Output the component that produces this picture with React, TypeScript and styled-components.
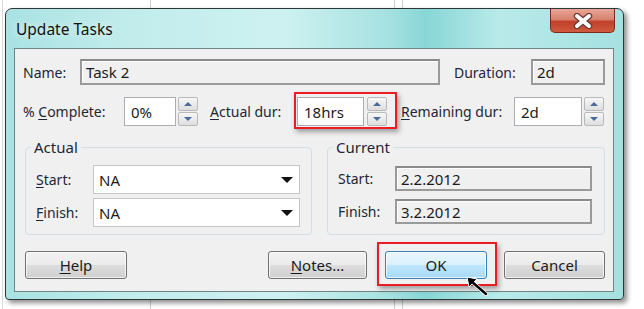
import React from 'react';
import styled, { createGlobalStyle } from 'styled-components';

const GlobalStyle = createGlobalStyle`
  html, body {
    margin: 0;
    padding: 0;
    background: #fff;
  }
  body {
    font-family: "Noto Sans", "Open Sans", sans-serif;
    font-size: 14px;
    color: #1b1b1b;
  }
`;

const Page = styled.div`
  position: relative;
  width: 644px;
  height: 309px;
  box-sizing: border-box;
  padding: 8px 0 0 5px;
  overflow: hidden;
  background:
    linear-gradient(#cfcfcf, #cfcfcf) 150px 0 / 1px 100% no-repeat,
    linear-gradient(#cfcfcf, #cfcfcf) 394px 0 / 1px 100% no-repeat,
    linear-gradient(#cfcfcf, #cfcfcf) 402px 0 / 1px 100% no-repeat,
    linear-gradient(#d8d8d8, #d8d8d8) 2px 0 / 1px 100% no-repeat,
    #fff;
`;

const Window = styled.div`
  width: 619px;
  height: 292px;
  box-sizing: border-box;
  border: 1px solid #2c3838;
  border-radius: 7px 7px 4px 4px;
  display: flex;
  flex-direction: column;
  background: linear-gradient(
    to right,
    #a9e2e3 0%,
    #c2ecec 20%,
    #cdf1f0 45%,
    #a6e1e1 62%,
    #88d6d6 68%,
    #b9eaea 80%,
    #a5e0e0 100%
  );
  box-shadow: 3px 3px 5px rgba(0, 0, 0, 0.45);
`;

const TitleBar = styled.div`
  height: 39px;
  display: flex;
  align-items: flex-start;
  padding-left: 10px;
`;

const Title = styled.span`
  font-size: 15.5px;
  line-height: 15px;
  margin-top: 13px;
  color: #111;
  text-shadow: 0 0 8px rgba(255, 255, 255, 0.9);
`;

const CloseButton = styled.div`
  margin-left: auto;
  margin-right: 8px;
  width: 65px;
  height: 24px;
  box-sizing: border-box;
  border: 1px solid #7d2a1d;
  border-top: none;
  border-radius: 0 0 5px 5px;
  background: linear-gradient(#e9a597 0%, #d9826f 45%, #c0402a 55%, #cf5a3e 100%);
  display: flex;
  align-items: center;
  justify-content: center;
`;

const Client = styled.div`
  flex: 1;
  margin: 0 9px 7px 8px;
  box-sizing: border-box;
  border: 1px solid #6f8585;
  background: #f0f0f0;
  padding: 10px 0 0 0;
  display: flex;
  flex-direction: column;
`;

const Row = styled.div<{ $top?: number }>`
  display: flex;
  align-items: center;
  margin-top: ${(p) => p.$top ?? 0}px;
`;

const Label = styled.span<{ $w: number; $ml?: number }>`
  width: ${(p) => p.$w}px;
  margin-left: ${(p) => p.$ml ?? 0}px;
  flex: none;
  white-space: nowrap;
  color: #1e2636;
`;

const Key = styled.span`
  text-decoration: underline;
  text-underline-offset: 2px;
`;

const Field = styled.div<{ $w: number; $h?: number; $ro?: boolean }>`
  width: ${(p) => p.$w}px;
  height: ${(p) => p.$h ?? 26}px;
  flex: none;
  box-sizing: border-box;
  display: flex;
  align-items: center;
  padding-left: ${(p) => (p.$ro ? 4 : 6)}px;
  font-size: 15px;
  background: ${(p) => (p.$ro ? '#f0f0f0' : '#fff')};
  border: ${(p) => (p.$ro ? '2px solid #9a9a9a' : '1px solid #abadb3')};
  border-top-color: ${(p) => (p.$ro ? '#8a8a8a' : '#abadb3')};
  ${(p) => (p.$ro ? 'box-shadow: inset 1px 1px 0 #fff;' : '')}
`;

const Spinner = styled.div<{ $ml?: number }>`
  margin-left: ${(p) => p.$ml ?? 2}px;
  width: 20px;
  height: 29px;
  flex: none;
  display: flex;
  flex-direction: column;
  justify-content: space-between;
`;

const SpinButton = styled.div<{ $down?: boolean }>`
  height: 14px;
  box-sizing: border-box;
  border: 1px solid #b9b9b9;
  border-radius: 2px;
  background: linear-gradient(#f7f7f7, #dedede);
  display: flex;
  align-items: center;
  justify-content: center;

  &::after {
    content: '';
    width: 0;
    height: 0;
    border-left: 4px solid transparent;
    border-right: 4px solid transparent;
    ${(p) =>
      p.$down ? 'border-top: 4px solid #4b6a9a;' : 'border-bottom: 4px solid #4b6a9a;'}
  }
`;

const Highlight = styled.div<{ $pad: string; $neg: string }>`
  position: relative;
  display: flex;
  align-items: center;
  flex: none;
  border: 2px solid #ea1c24;
  padding: ${(p) => p.$pad};
  margin: ${(p) => p.$neg};
  box-shadow: 2px 3px 5px rgba(0, 0, 0, 0.35);
`;

const Groups = styled.div`
  display: flex;
  gap: 15px;
  margin: 11px 0 0 10px;
`;

const Group = styled.fieldset<{ $w: number; $pad: string; $gap: number }>`
  width: ${(p) => p.$w}px;
  box-sizing: border-box;
  margin: 0;
  border: 1px solid #d3dde2;
  border-radius: 4px;
  padding: ${(p) => p.$pad};
  display: flex;
  flex-direction: column;
  gap: ${(p) => p.$gap}px;
`;

const Legend = styled.legend`
  padding: 0 3px;
  margin-left: -5px;
  line-height: 20px;
  font-size: 15px;
  color: #1e2636;
`;

const Dropdown = styled.div`
  width: 207px;
  height: 29px;
  box-sizing: border-box;
  border: 1px solid #c6c6c6;
  background: #fff;
  display: flex;
  align-items: center;
  padding: 0 6px 0 5px;
  font-size: 15px;

  &::after {
    content: '';
    margin-left: auto;
    border-left: 6px solid transparent;
    border-right: 6px solid transparent;
    border-top: 6px solid #111;
  }
`;

const ButtonRow = styled.div`
  display: flex;
  align-items: center;
  margin: 16px 0 0 10px;
`;

const Button = styled.div<{ $w: number; $ml?: number; $def?: boolean }>`
  width: ${(p) => p.$w}px;
  height: 28px;
  margin-left: ${(p) => p.$ml ?? 0}px;
  box-sizing: border-box;
  flex: none;
  border: 1px solid ${(p) => (p.$def ? '#3c7fb1' : '#707070')};
  border-radius: 3px;
  background: ${(p) =>
    p.$def
      ? 'linear-gradient(#eaf6fd 0%, #d9f0fc 50%, #bee6fd 51%, #a7d9f5 100%)'
      : 'linear-gradient(#f2f2f2 0%, #ebebeb 50%, #dddddd 51%, #cfcfcf 100%)'};
  box-shadow: inset 0 0 0 1px rgba(255, 255, 255, 0.7);
  display: flex;
  align-items: center;
  justify-content: center;
  font-size: 15px;
  color: #1b1b1b;
`;

const Cursor = styled.svg`
  position: absolute;
  left: 87px;
  top: 32px;
`;

export default function App() {
  return (
    <Page>
      <GlobalStyle />
      <Window>
        <TitleBar>
          <Title>Update Tasks</Title>
          <CloseButton>
            <svg width="22" height="16" viewBox="0 0 22 16">
              <path
                d="M5 3 L17 13 M17 3 L5 13"
                stroke="#6a3a32"
                strokeWidth="6.5"
                strokeLinecap="round"
              />
              <path
                d="M5 3 L17 13 M17 3 L5 13"
                stroke="#fff"
                strokeWidth="4"
                strokeLinecap="round"
              />
            </svg>
          </CloseButton>
        </TitleBar>
        <Client>
          <Row>
            <Label $w={57} $ml={8}>Name:</Label>
            <Field $w={360} $ro>Task 2</Field>
            <Label $w={77} $ml={14}>Duration:</Label>
            <Field $w={74} $ro>2d</Field>
          </Row>
          <Row $top={12}>
            <Label $w={101} $ml={8}>
              % <Key>C</Key>omplete:
            </Label>
            <Field $w={52} $h={29}>0%</Field>
            <Spinner>
              <SpinButton />
              <SpinButton $down />
            </Spinner>
            <Label $w={87} $ml={12}>
              <Key>A</Key>ctual dur:
            </Label>
            <Highlight $pad="3px 8px 1px 1px" $neg="-5px -10px -3px -3px">
              <Field $w={67} $h={29}>18hrs</Field>
              <Spinner $ml={3}>
                <SpinButton />
                <SpinButton $down />
              </Spinner>
            </Highlight>
            <Label $w={113} $ml={14}>
              <Key>R</Key>emaining dur:
            </Label>
            <Field $w={68} $h={29}>2d</Field>
            <Spinner>
              <SpinButton />
              <SpinButton $down />
            </Spinner>
          </Row>
          <Groups>
            <Group $w={287} $pad="8px 11px 7px 10px" $gap={4}>
              <Legend>Actual</Legend>
              <Row>
                <Label $w={57}>
                  <Key>S</Key>tart:
                </Label>
                <Dropdown>NA</Dropdown>
              </Row>
              <Row>
                <Label $w={57}>
                  <Key>F</Key>inish:
                </Label>
                <Dropdown>NA</Dropdown>
              </Row>
            </Group>
            <Group $w={277} $pad="9px 12px 10px 10px" $gap={8}>
              <Legend>Current</Legend>
              <Row>
                <Label $w={57}>Start:</Label>
                <Field $w={197} $h={25} $ro>2.2.2012</Field>
              </Row>
              <Row>
                <Label $w={57}>Finish:</Label>
                <Field $w={197} $h={25} $ro>3.2.2012</Field>
              </Row>
            </Group>
          </Groups>
          <ButtonRow>
            <Button $w={102}>
              <span>
                <Key>H</Key>elp
              </span>
            </Button>
            <Button $w={99} $ml={141}>
              <span>
                <Key>N</Key>otes...
              </span>
            </Button>
            <Highlight $pad="7px 8px 5px 6px" $neg="-9px -10px -7px 10px">
              <Button $w={102} $def>OK</Button>
              <Cursor width="24" height="22" viewBox="0 0 24 22">
                <path d="M5 5 L20 18" stroke="#fff" strokeWidth="4" strokeLinecap="round" />
                <path d="M1 1 L11 3 L3 11 Z" fill="#000" stroke="#fff" strokeWidth="1" />
                <path d="M5 5 L20 18" stroke="#000" strokeWidth="2.4" strokeLinecap="round" />
              </Cursor>
            </Highlight>
            <Button $w={101} $ml={17}>Cancel</Button>
          </ButtonRow>
        </Client>
      </Window>
    </Page>
  );
}
